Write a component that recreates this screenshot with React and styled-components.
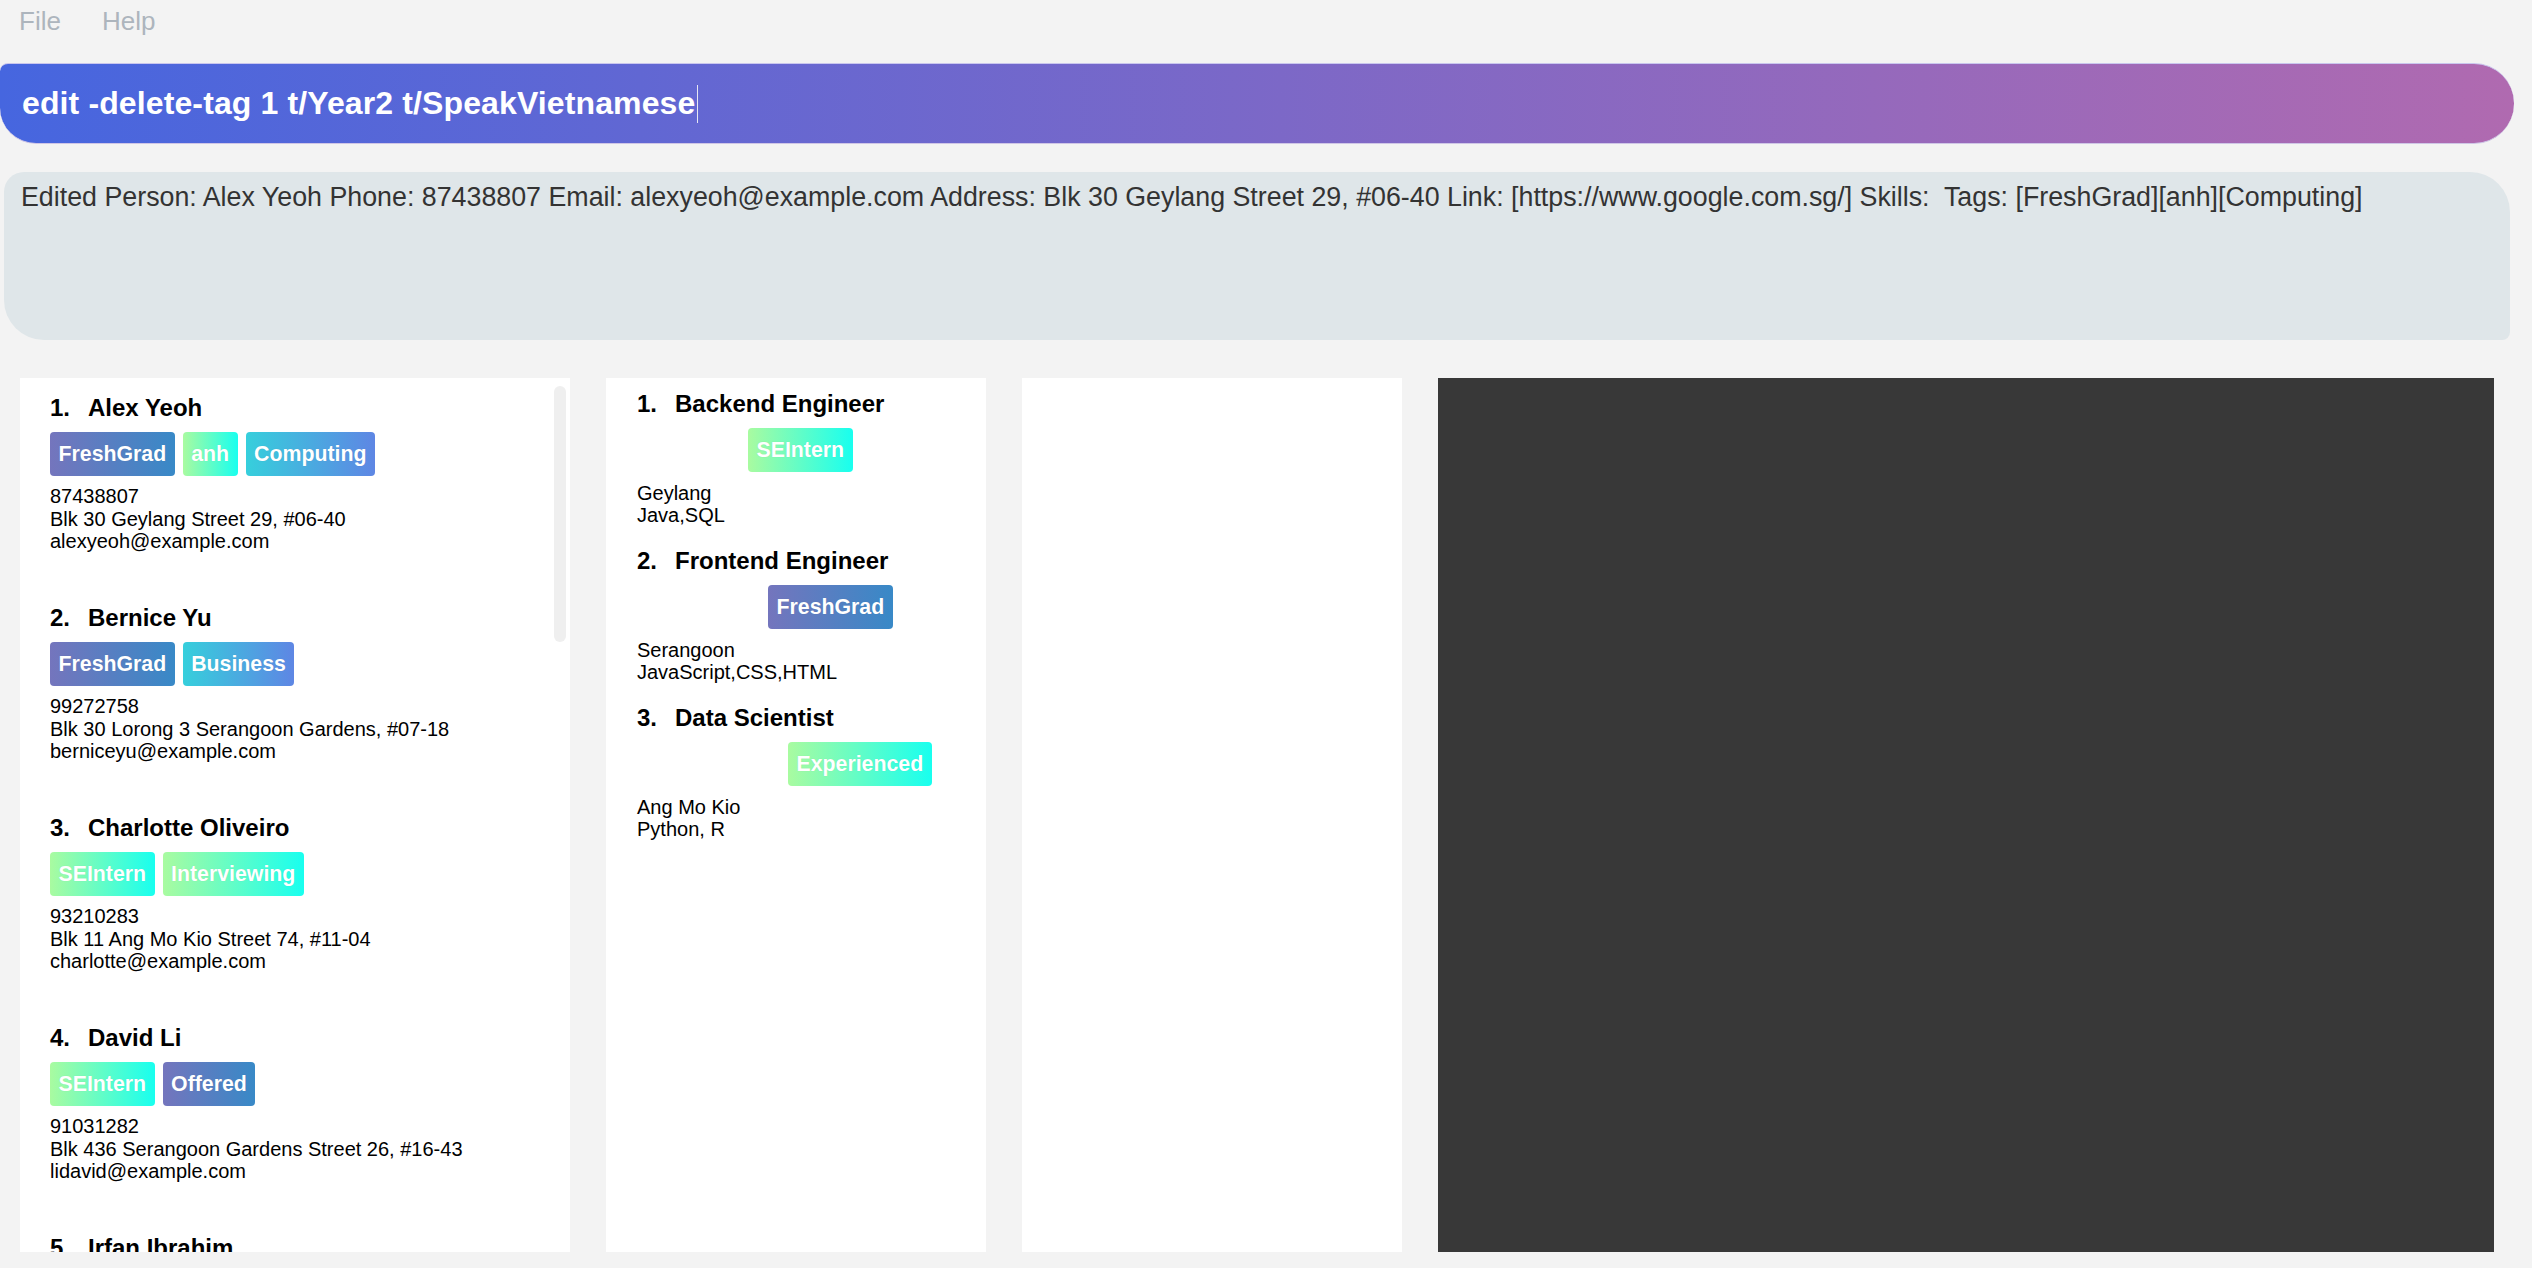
import React from "react";
import styled, { createGlobalStyle } from "styled-components";

const GlobalStyle = createGlobalStyle`
  html, body {
    margin: 0;
    padding: 0;
    background: #f3f3f3;
    font-family: "Liberation Sans", Arial, Helvetica, sans-serif;
  }
  * { box-sizing: border-box; }
`;

const gradients = {
  purple: "linear-gradient(to right, #7475bd, #3889c7)",
  mint: "linear-gradient(to right, #a9fba0, #18ffef)",
  ocean: "linear-gradient(to right, #36cfdc, #5e86e4)",
};

const Page = styled.div`
  width: 2532px;
  height: 1268px;
  display: flex;
  flex-direction: column;
  overflow: hidden;
`;

const MenuBar = styled.div`
  display: flex;
  gap: 41px;
  padding: 6px 0 0 19px;
  height: 63px;
`;

const MenuItem = styled.span`
  font-size: 26px;
  color: #adb5bd;
`;

const CommandBox = styled.div`
  width: 2514px;
  height: 81px;
  display: flex;
  align-items: center;
  padding-left: 22px;
  border-radius: 8px 40px 40px 36px;
  background: linear-gradient(to right, #4666df, #b06ab0);
  border-top: 1px solid #c9c6ee;
  border-bottom: 1px solid #cfc6e6;
  color: #fff;
  font-size: 32px;
  letter-spacing: 0.12px;
  font-weight: bold;
`;

const Caret = styled.span`
  display: inline-block;
  width: 1px;
  height: 38px;
  margin-left: 2px;
  background: #e6e6f2;
`;

const ResultBox = styled.div`
  margin: 28px 0 0 4px;
  width: 2506px;
  height: 168px;
  padding: 10px 0 0 17px;
  border-radius: 20px 40px 8px 40px;
  background: #dfe6e9;
  color: #333;
  font-size: 26.8px;
  white-space: nowrap;
`;

const PanelRow = styled.div`
  display: flex;
  gap: 36px;
  padding-left: 20px;
  margin-top: 38px;
  height: 874px;
`;

const Panel = styled.div`
  position: relative;
  width: ${(p) => p.$width}px;
  height: 100%;
  background: ${(p) => (p.$dark ? "#383838" : "#fff")};
  overflow: hidden;
  padding: ${(p) => p.$pad || "0"};
`;

const Scrollbar = styled.div`
  position: absolute;
  top: 8px;
  right: 4px;
  width: 12px;
  height: 256px;
  border-radius: 6px;
  background: #efefef;
`;

const Card = styled.div`
  padding: ${(p) => p.$pad};
  color: #000;
`;

const Title = styled.div`
  display: flex;
  font-size: 24px;
  font-weight: bold;
  line-height: 26px;
  white-space: nowrap;
`;

const Index = styled.span`
  width: 38px;
`;

const TagRow = styled.div`
  display: flex;
  gap: 8px;
  margin: 11px 0 0 ${(p) => p.$indent || 0}px;
`;

const Tag = styled.span`
  display: flex;
  align-items: center;
  height: 44px;
  padding: 0 8.5px;
  border-radius: 4px;
  background: ${(p) => gradients[p.$tone]};
  color: #fff;
  font-size: 21.3px;
  font-weight: bold;
  text-shadow: 0 0 1px rgba(0, 0, 0, 0.12);
`;

const Lines = styled.div`
  margin-top: ${(p) => p.$gap}px;
  font-size: 20px;
  line-height: ${(p) => p.$lh}px;
  white-space: nowrap;
`;

const tone = {
  FreshGrad: "purple",
  Offered: "purple",
  anh: "mint",
  SEIntern: "mint",
  Interviewing: "mint",
  Experienced: "mint",
  Computing: "ocean",
  Business: "ocean",
  classmates: "ocean",
};

const persons = [
  { name: "Alex Yeoh", tags: ["FreshGrad", "anh", "Computing"], phone: "87438807", address: "Blk 30 Geylang Street 29, #06-40", email: "alexyeoh@example.com" },
  { name: "Bernice Yu", tags: ["FreshGrad", "Business"], phone: "99272758", address: "Blk 30 Lorong 3 Serangoon Gardens, #07-18", email: "berniceyu@example.com" },
  { name: "Charlotte Oliveiro", tags: ["SEIntern", "Interviewing"], phone: "93210283", address: "Blk 11 Ang Mo Kio Street 74, #11-04", email: "charlotte@example.com" },
  { name: "David Li", tags: ["SEIntern", "Offered"], phone: "91031282", address: "Blk 436 Serangoon Gardens Street 26, #16-43", email: "lidavid@example.com" },
  { name: "Irfan Ibrahim", tags: ["classmates"], phone: "92492021", address: "Blk 47 Tampines Street 20, #17-35", email: "irfan@example.com" },
];

const jobs = [
  { title: "Backend Engineer", tag: "SEIntern", indent: 111, place: "Geylang", skills: "Java,SQL" },
  { title: "Frontend Engineer", tag: "FreshGrad", indent: 131, place: "Serangoon", skills: "JavaScript,CSS,HTML" },
  { title: "Data Scientist", tag: "Experienced", indent: 151, place: "Ang Mo Kio", skills: "Python, R" },
];

const result =
  "Edited Person: Alex Yeoh Phone: 87438807 Email: alexyeoh@example.com Address: Blk 30 Geylang Street 29, #06-40 Link: [https://www.google.com.sg/] Skills:  Tags: [FreshGrad][anh][Computing]";

export default function App() {
  return (
    <Page>
      <GlobalStyle />
      <MenuBar>
        <MenuItem>File</MenuItem>
        <MenuItem>Help</MenuItem>
      </MenuBar>
      <CommandBox>
        edit -delete-tag 1 t/Year2 t/SpeakVietnamese
        <Caret />
      </CommandBox>
      <ResultBox>{result.replace("  ", "\u00a0 ")}</ResultBox>
      <PanelRow>
        <Panel $width={550} $pad="0 0 0 30px">
          {persons.map((p, i) => (
            <Card key={p.name} $pad="17px 0 35.5px 0">
              <Title>
                <Index>{i + 1}.</Index>
                {p.name}
              </Title>
              <TagRow>
                {p.tags.map((t) => (
                  <Tag key={t} $tone={tone[t]}>{t}</Tag>
                ))}
              </TagRow>
              <Lines $gap={9} $lh={22.5}>
                <div>{p.phone}</div>
                <div>{p.address}</div>
                <div>{p.email}</div>
              </Lines>
            </Card>
          ))}
          <Scrollbar />
        </Panel>
        <Panel $width={380} $pad="13px 0 0 31px">
          {jobs.map((j, i) => (
            <Card key={j.title} $pad="0 0 22px 0">
              <Title>
                <Index>{i + 1}.</Index>
                {j.title}
              </Title>
              <TagRow $indent={j.indent}>
                <Tag $tone={tone[j.tag]}>{j.tag}</Tag>
              </TagRow>
              <Lines $gap={10} $lh={22}>
                <div>{j.place}</div>
                <div>{j.skills}</div>
              </Lines>
            </Card>
          ))}
        </Panel>
        <Panel $width={380} />
        <Panel $width={1056} $dark />
      </PanelRow>
    </Page>
  );
}
